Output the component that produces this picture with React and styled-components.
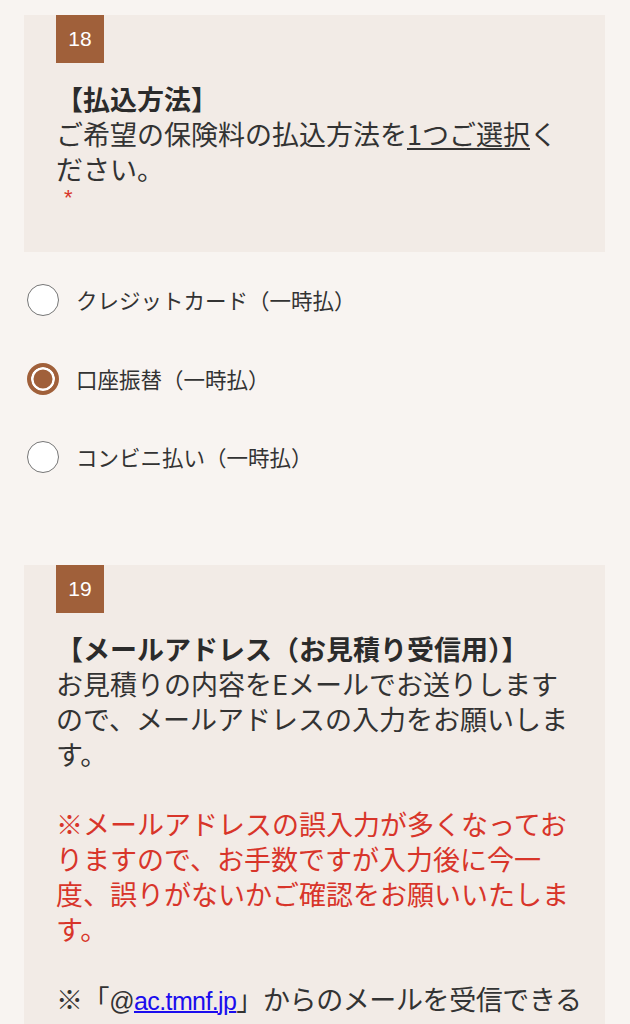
import React from "react";
import styled, { createGlobalStyle } from "styled-components";

const GlobalStyle = createGlobalStyle`
  html, body {
    margin: 0;
    padding: 0;
    background: #f8f4f1;
  }
  body {
    font-family: "Noto Sans CJK JP", "Noto Sans", sans-serif;
    color: #333333;
  }
`;

const Page = styled.div`
  padding: 15px 25px 0 24px;
  display: flex;
  flex-direction: column;
  overflow: hidden;
  height: 1009px;
`;

const Card = styled.section`
  background: #f2ebe6;
  padding: 0 32px ${(p) => p.$bottom || 0}px;
  display: flex;
  flex-direction: column;
  align-items: flex-start;
  margin-top: ${(p) => p.$top || 0}px;
`;

const Badge = styled.div`
  width: 48px;
  height: 48px;
  background: #a0603a;
  color: #ffffff;
  font-family: "Liberation Sans", Arial, sans-serif;
  font-size: 21px;
  display: flex;
  align-items: center;
  justify-content: center;
  margin-bottom: 17.5px;
`;

const Title = styled.div`
  font-size: 27px;
  line-height: 35px;
  font-weight: 700;
  color: #2b2b2b;
`;

const Text = styled.p`
  margin: 0 0 ${(p) => (p.$gap ? 35 : 0)}px;
  font-size: 27px;
  line-height: 35px;
  color: ${(p) => (p.$warn ? "#d8352a" : "#333333")};
  width: 100%;
`;

const NoWrap = styled.span`
  white-space: nowrap;
  letter-spacing: -0.4px;
`;

const Latin = styled.span`
  font-family: "Liberation Sans", Arial, sans-serif;
  font-size: 25px;
  letter-spacing: -0.6px;
`;

const Under = styled.span`
  text-decoration: underline;
  text-underline-offset: 3px;
  text-decoration-thickness: 1.5px;
`;

const Link = styled.a`
  color: #1a0dee;
  text-decoration: underline;
  text-decoration-thickness: 1.5px;
`;

const Required = styled.div`
  color: #d8352a;
  font-family: "Liberation Sans", Arial, sans-serif;
  font-size: 22px;
  line-height: 24px;
  margin-left: 8px;
`;

const RadioGroup = styled.div`
  display: flex;
  flex-direction: column;
  gap: 46.5px;
  margin-top: 32px;
  padding-left: 3px;
`;

const RadioRow = styled.label`
  display: flex;
  align-items: center;
  height: 32px;
  gap: 17px;
`;

const Circle = styled.span`
  box-sizing: border-box;
  width: 32px;
  height: 32px;
  border-radius: 50%;
  flex: none;
  background: ${(p) => (p.$checked ? "#a0603a" : "#ffffff")};
  border: ${(p) => (p.$checked ? "4px solid #a0603a" : "1.5px solid #767676")};
  box-shadow: ${(p) => (p.$checked ? "inset 0 0 0 2.5px #ffffff" : "none")};
`;

const RadioLabel = styled.span`
  font-size: 21.5px;
  line-height: 32px;
  color: #333333;
`;

const options = [
  { label: "クレジットカード（一時払）", checked: false },
  { label: "口座振替（一時払）", checked: true },
  { label: "コンビニ払い（一時払）", checked: false },
];

export default function App() {
  return (
    <>
      <GlobalStyle />
      <Page lang="ja">
        <Card $bottom={42.5}>
          <Badge>18</Badge>
          <Title>【払込方法】</Title>
          <Text>
            ご希望の保険料の払込方法を<Under>1つご選択</Under>ください。
          </Text>
          <Required>*</Required>
        </Card>

        <RadioGroup>
          {options.map((o) => (
            <RadioRow key={o.label}>
              <Circle $checked={o.checked} />
              <RadioLabel>{o.label}</RadioLabel>
            </RadioRow>
          ))}
        </RadioGroup>

        <Card $top={92}>
          <Badge>19</Badge>
          <Title>【メールアドレス（お見積り受信用）】</Title>
          <Text $gap>
            お見積りの内容をEメールでお送りしますので、メールアドレスの入力をお願いします。
          </Text>
          <Text $gap $warn>
            ※メールアドレスの誤入力が多くなっておりますので、お手数ですが入力後に今一度、誤りがないかご確認をお願いいたします。
          </Text>
          <Text>
            <NoWrap>
              ※「<Latin>@</Latin>
              <Link href="#">
                <Latin>ac.tmnf.jp</Latin>
              </Link>
              」からのメールを受信できる
            </NoWrap>
            よう、ドメイン指定受信の設定をお願いします。
          </Text>
        </Card>
      </Page>
    </>
  );
}
